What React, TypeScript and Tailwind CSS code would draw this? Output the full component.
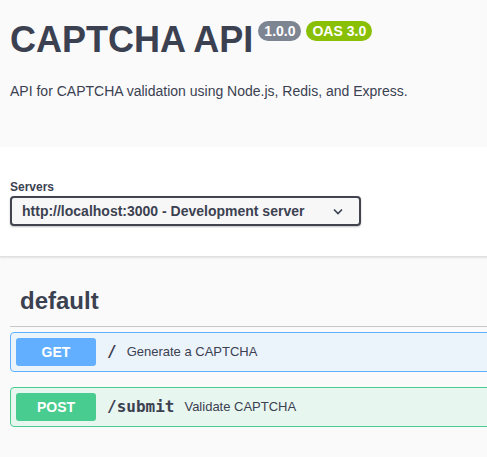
import React from "react";

const sans = { fontFamily: '"Liberation Sans", Arial, sans-serif' };

function OpBlock({
  method,
  path,
  summary,
  mono,
}: {
  method: "GET" | "POST";
  path: string;
  summary: string;
  mono?: boolean;
}) {
  const isGet = method === "GET";
  return (
    <div
      className={`flex items-center h-[40px] rounded-[4px] border pl-[5px] ${
        isGet
          ? "border-[#61affe] bg-[#ebf3fb]"
          : "border-[#49cc90] bg-[#e8f6f0]"
      }`}
    >
      <div
        className={`w-[80px] h-[28px] rounded-[3px] flex items-center justify-center text-white text-[14px] font-bold ${
          isGet ? "bg-[#61affe]" : "bg-[#49cc90]"
        }`}
      >
        {method}
      </div>
      <span
        className={`ml-[11px] text-[#3b4151] font-bold ${
          mono ? "text-[16px]" : "text-[16px]"
        }`}
        style={{ fontFamily: '"DejaVu Sans Mono", monospace' }}
      >
        {path}
      </span>
      <span className="ml-[10px] text-[13px] text-[#3b4151]">{summary}</span>
    </div>
  );
}

export default function App() {
  return (
    <div className="w-[487px] h-[457px] overflow-hidden bg-[#fafafa]" style={sans}>
      <div className="w-[520px]">
        <section className="h-[147px] bg-[#fafafa] px-[10px] pt-[18px]">
          <div className="flex items-start">
            <h1 className="text-[36px] leading-[44px] font-bold text-[#3b4151]">
              CAPTCHA API
            </h1>
            <div className="flex gap-[5px] ml-[5px] mt-[3px]">
              <span className="h-[20px] px-[6px] rounded-[10px] bg-[#7d8492] text-white text-[14px] font-bold leading-[20px]">
                1.0.0
              </span>
              <span className="h-[20px] px-[6px] rounded-[10px] bg-[#89bf04] text-white text-[14px] font-bold leading-[20px]">
                OAS 3.0
              </span>
            </div>
          </div>
          <p className="mt-[19px] text-[14px] text-[#3b4151]">
            API for CAPTCHA validation using Node.js, Redis, and Express.
          </p>
        </section>

        <section className="h-[110px] bg-white px-[10px] pt-[33px] border-b border-[#e0e0e0] shadow-[0_1px_2px_rgba(0,0,0,0.1)]">
          <div className="text-[12px] font-bold text-[#3b4151] leading-[14px]">
            Servers
          </div>
          <div className="mt-[2px] w-[351px] h-[30px] rounded-[4px] border-2 border-[#41444e] bg-[#f7f7f7] shadow-[0_1px_2px_rgba(0,0,0,0.25)] flex items-center pl-[10px] pr-[16px]">
            <span className="text-[14px] font-bold text-[#3b4151] flex-1">
              http://localhost:3000 - Development server
            </span>
            <svg width="10" height="7" viewBox="0 0 10 7" fill="none">
              <path
                d="M1 1.5L5 5.5L9 1.5"
                stroke="#3b4151"
                strokeWidth="1.6"
              />
            </svg>
          </div>
        </section>

        <section className="px-[10px] pt-[30px]">
          <h3 className="pl-[10px] text-[24px] font-bold text-[#3b4151] leading-[28px]">
            default
          </h3>
          <div className="mt-[11px] border-t border-[#c8c8c8]" />
          <div className="mt-[5px] flex flex-col gap-[15px]">
            <OpBlock method="GET" path="/" summary="Generate a CAPTCHA" />
            <OpBlock
              method="POST"
              path="/submit"
              summary="Validate CAPTCHA"
              mono
            />
          </div>
        </section>
      </div>
    </div>
  );
}
